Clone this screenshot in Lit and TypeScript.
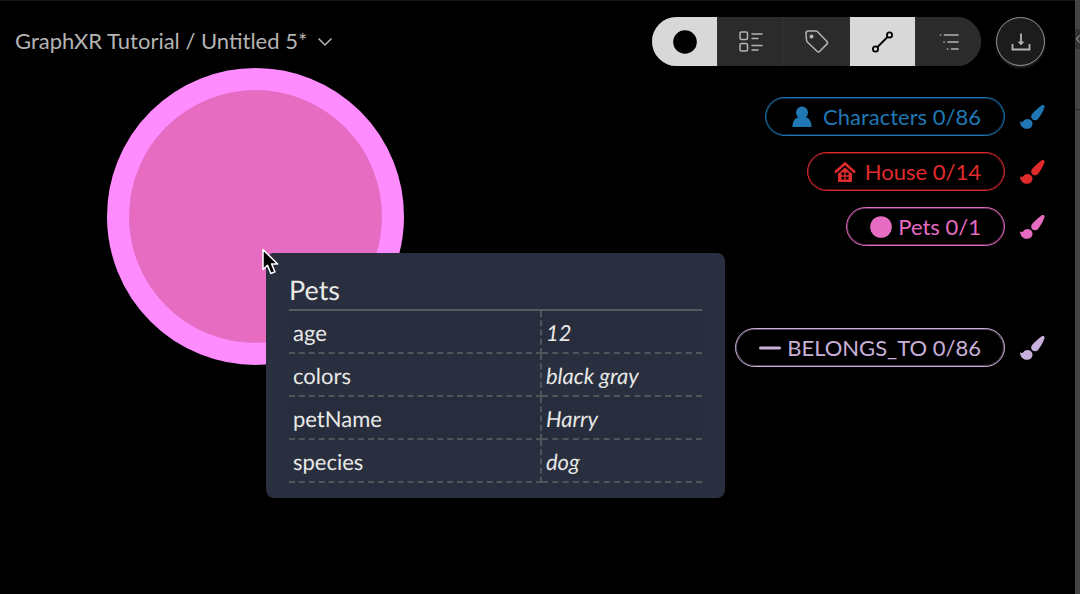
import { LitElement, html, css, svg } from "lit";
import { customElement, property } from "lit/decorators.js";

const userIcon = svg`<svg width="28" height="22" viewBox="-3 0 28 22" fill="currentColor" aria-hidden="true">
  <path d="M10 .5a6 6 0 0 1 6 6c0 2-.9 3.600-2.200 4.700 3.600.8 5.700 4.600 5.700 9.800H.5c0-5.200 2.100-9 5.700-9.800C4.900 10.100 4 8.500 4 6.500a6 6 0 0 1 6-6z"/></svg>`;

const houseIcon = svg`<svg width="28" height="22" viewBox="-3 0 28 22" fill="none" aria-hidden="true">
  <path d="M1 11.500 11 2.500l10 9" stroke="currentColor" stroke-width="2.500"/>
  <path fill="currentColor" fill-rule="evenodd" d="M11 6.500l7 6.300V21H4v-8.200zM7.500 11.500v2.800h2.800v-2.800zM11.700 11.500v2.800h2.800v-2.800zM7.500 15.700v2.800h2.800v-2.800zM11.700 15.700v2.800h2.800v-2.800z"/></svg>`;

const dotIcon = svg`<svg width="22" height="22" viewBox="0 0 22 22" aria-hidden="true"><circle cx="11" cy="11" r="10.800" fill="currentColor"/></svg>`;

const dashIcon = svg`<svg width="22" height="22" viewBox="0 0 22 22" aria-hidden="true"><path d="M1.500 11h19" stroke="currentColor" stroke-width="3" stroke-linecap="round"/></svg>`;

const brushIcon = svg`<svg width="25" height="26" viewBox="0.5 0 25 26" fill="currentColor" aria-hidden="true">
  <path d="M22.200 1.300c1.500-1.100 3.500.2 2.700 2.200-1.200 3.500-3.500 8-6.200 11.200-1.600 1.900-4.100 2-5.600.8-1.700-1.400-2-3.600-.5-5.400C15.100 7 18.800 3.700 22.200 1.300z"/>
  <path d="M.5 17.200c1.200 1 2.500.9 3.500-.3 1.700-2.200 4.700-2.600 7-1 2.400 1.700 2.600 4.600 1 6.900-2.900 3.900-11.500 2.200-11.500-5.600z"/></svg>`;

type Legend = { name: string; count: string; color: string; icon: unknown };

const categories: Legend[] = [
  { name: "Characters", count: "0/86", color: "#1f78b4", icon: userIcon },
  { name: "House", count: "0/14", color: "#e02a2c", icon: houseIcon },
  { name: "Pets", count: "0/1", color: "#e66cc2", icon: dotIcon },
];
const relationships: Legend[] = [
  { name: "BELONGS_TO", count: "0/86", color: "#c8b0da", icon: dashIcon },
];

const tools = [
  { label: "Node color", on: true, icon: svg`<svg width="26" height="26" viewBox="0 0 26 26"><circle cx="13" cy="13" r="11.800" fill="#000"/></svg>` },
  { label: "Properties", on: false, icon: svg`<svg width="26" height="26" viewBox="0 0 26 26" fill="none" stroke="currentColor" stroke-width="1.500" stroke-linecap="round"><rect x="2" y="3" width="7.500" height="7.500" rx="1.500"/><rect x="2" y="14.500" width="7.500" height="7.500" rx="1.500"/><path d="M14 5h10M14 9.500h6M14 16.500h10M14 21h6"/></svg>` },
  { label: "Tags", on: false, icon: svg`<svg width="26" height="26" viewBox="0 0 26 26" fill="none" stroke="currentColor" stroke-width="1.500" stroke-linejoin="round"><path d="M2 4.500C2 3 3 2 4.500 2h7c.8 0 1.500.3 2 .8l9.300 9.400c.9.900.9 2 0 2.900l-7 7.200c-.8.800-2 .8-2.800 0L3.300 13c-.5-.5-.8-1.200-.8-2z"/><circle cx="7.500" cy="7.500" r="1.300" fill="currentColor"/></svg>` },
  { label: "Relationships", on: true, icon: svg`<svg width="26" height="26" viewBox="0 0 26 26" fill="none" stroke="#000" stroke-width="1.800"><circle cx="19.500" cy="6" r="2.600"/><circle cx="5.500" cy="20" r="2.600"/><path d="M7.500 18 17.500 8"/></svg>` },
  { label: "List", on: false, icon: svg`<svg width="26" height="26" viewBox="0 0 26 26" fill="none" stroke="currentColor" stroke-width="1.600" stroke-linecap="round"><path d="M8.500 6h13.500M12 13h10M15.500 20h6.500M4.500 6h.2M8 13h.2M11.500 20h.2"/></svg>` },
];

@customElement("legend-row")
class LegendRow extends LitElement {
  @property({ attribute: false }) item!: Legend;

  static styles = css`
    :host { display: block; }
    .row { display: flex; align-items: center; gap: 15px; }
    button { font: inherit; color: inherit; background: none; cursor: pointer; }
    .pill {
      display: flex; align-items: center; gap: 6px; height: 39px;
      padding: 0 23px; border: 1px solid; border-radius: 20px;
      box-shadow: inset 0 0 0 1px color-mix(in srgb, currentColor 40%, transparent);
      font-size: 22px; line-height: 26px; white-space: nowrap;
    }
    .brush { display: flex; padding: 0; border: 0; }
    svg { display: block; }
  `;

  render() {
    const { name, count, color, icon } = this.item;
    return html`<div class="row" style="color:${color}">
      <button class="pill" type="button">${icon}<span>${name} ${count}</span></button>
      <button class="brush" type="button" aria-label="Style ${name}">${brushIcon}</button>
    </div>`;
  }
}

@customElement("property-card")
class PropertyCard extends LitElement {
  static styles = css`
    :host { display: block; }
    .card {
      padding: 20px 23px 15px; border-radius: 8px;
      background: #292f3f; color: #e8e8e6;
    }
    h2 {
      margin: 0; padding-bottom: 2px; border-bottom: 2px solid #565b62;
      font-size: 27px; line-height: 34px; font-weight: 400;
    }
    table { width: 100%; border-collapse: collapse; table-layout: fixed; font-size: 22px; line-height: 26px; }
    th, td {
      box-sizing: border-box; padding: 9px 4px 6px; border-bottom: 2px dashed #505559;
      font-weight: 400; text-align: left;
    }
    th { width: 61%; border-right: 2px dashed #505559; }
    td { font-style: italic; }
    tr:nth-child(odd) { background: #272d3c; }
  `;

  render() {
    const rows = [["age", "12"], ["colors", "black gray"], ["petName", "Harry"], ["species", "dog"]];
    return html`<section class="card">
      <h2>Pets</h2>
      <table><tbody>
        ${rows.map(([k, v]) => html`<tr><th scope="row">${k}</th><td>${v}</td></tr>`)}
      </tbody></table>
    </section>`;
  }
}

@customElement("app-root")
class AppRoot extends LitElement {
  static styles = css`
    :host {
      display: block; position: relative; min-height: 100vh; overflow: hidden;
      background: #000; color: #b4b4b4; font-family: Lato, "Liberation Sans", sans-serif;
      box-sizing: border-box; text-rendering: geometricPrecision;
    }
    .shell { display: flex; min-height: 100vh; }
    .main { position: relative; flex: 1; padding: 16px 30px 16px 15px; border-top: 1px solid #171717; box-sizing: border-box; }
    button { font: inherit; color: inherit; cursor: pointer; }
    svg { display: block; }
    .top, .legend { position: relative; }
    .top { display: flex; align-items: center; justify-content: space-between; }
    .title {
      display: flex; align-items: center; gap: 10px; padding: 0 0 2px; border: 0; background: none;
      font-size: 22px; line-height: 28px;
    }
    .actions { display: flex; align-items: center; gap: 15px; }
    .tools { display: flex; gap: 1px; border-radius: 25px; overflow: hidden; background: #303030; }
    .tool {
      display: grid; place-items: center; width: 65px; height: 49px; padding: 0; border: 0;
      background: #2b2b2b;
    }
    .on { background: #d8d8d8; }
    .save {
      display: grid; place-items: center; width: 49px; height: 49px; padding: 0;
      border: 1px solid #999; border-radius: 50%; background: #1c1c1c; box-shadow: 0 2px 2px #222;
    }
    .legend { display: flex; flex-direction: column; align-items: flex-end; gap: 16px; margin-top: 31px; }
    .relations { margin-top: 82px; }
    .node {
      position: absolute; left: 107px; top: 67px; width: 297px; height: 297px; box-sizing: border-box;
      border: 22px solid #ff8cff; border-radius: 50%; background: #e66cc2;
    }
    .tip { position: absolute; left: 266px; top: 253px; width: 459px; }
    .cursor { position: absolute; left: 261px; top: 247px; }
    .edge { display: flex; flex-direction: column; width: 5px; background: #444; }
    .handle {
      margin-top: 29px; height: 20px; padding: 0; border: 0; background: #333;
    }
    .divider { margin-top: 60px; height: 1px; background: #2b2b2b; }
  `;

  render() {
    return html`<div class="shell">
      <main class="main">
        <div class="node"></div>
        <header class="top">
          <button class="title" type="button">GraphXR Tutorial / Untitled 5*
            <svg width="16" height="16" viewBox="0 0 16 16" fill="none" stroke="currentColor" stroke-width="1.500"><path d="M1.500 5.500 8 12 14.500 5.500"/></svg>
          </button>
          <div class="actions">
            <div class="tools">
              ${tools.map((t) => html`<button type="button" class="tool ${t.on ? "on" : ""}" aria-label=${t.label} aria-pressed=${t.on}>${t.icon}</button>`)}
            </div>
            <button class="save" type="button" aria-label="Download">
              <svg width="22" height="22" viewBox="0 0 22 22" fill="none" stroke="#b4b4b4" stroke-width="1.800"><path d="M11 2.500v10M2.500 13v5.500h17V13"/><path d="M8.500 11h5L11 13.800z" fill="#b4b4b4" stroke-width="1"/></svg>
            </button>
          </div>
        </header>
        <div class="legend">${categories.map((c) => html`<legend-row .item=${c}></legend-row>`)}</div>
        <div class="legend relations">${relationships.map((c) => html`<legend-row .item=${c}></legend-row>`)}</div>
      </main>
      <aside class="edge">
        <button class="handle" type="button" aria-label="Open panel"><svg width="5" height="20" viewBox="0 0 5 20" fill="none" stroke="#bbb"><path d="M4.500 6.500 1.500 10l3 3.500"/></svg></button>
        <div class="divider"></div>
      </aside>
      <property-card class="tip"></property-card>
      <svg class="cursor" width="20" height="30" viewBox="0 0 20 30"><path d="M2 2.500v20l4.500-4.200 3.400 8.200 4-1.700-3.300-7.800h6z" fill="#000" stroke="#fff" stroke-width="1.500" stroke-linejoin="round"/></svg>
    </div>`;
  }
}
